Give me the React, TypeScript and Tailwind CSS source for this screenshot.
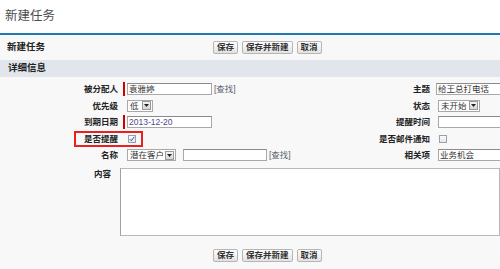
import React from 'react'

const font = "font-['Liberation_Sans','Noto_Sans_CJK_SC',sans-serif]"

function Btn({ children }: { children: React.ReactNode }) {
  return (
    <button className="h-[13px] px-[3px] flex items-center rounded-[2px] border border-[#b5b5b5] bg-gradient-to-b from-[#ffffff] to-[#e2e2e2] text-[8.5px] font-bold leading-none text-[#333]">
      {children}
    </button>
  )
}

function Buttons() {
  return (
    <div className="flex items-center gap-[4px]">
      <Btn>保存</Btn>
      <Btn>保存并新建</Btn>
      <Btn>取消</Btn>
    </div>
  )
}

function Label({ children, pr = 'pr-[3px]' }: { children: React.ReactNode; pr?: string }) {
  return <div className={`text-right text-[8.5px] font-bold text-[#222] whitespace-nowrap leading-none ${pr}`}>{children}</div>
}

function Req() {
  return <div className="w-[2px] h-[14px] bg-[#c00] mr-[2px]" />
}

function Input({ value, w = 'w-[85px]', color = 'text-[#333]' }: { value?: string; w?: string; color?: string }) {
  return (
    <div className={`${w} h-[12px] shrink-0 bg-white border border-[#a8a8a8] border-t-[#8a8a8a] flex items-center pl-[1px] text-[8.5px] leading-none whitespace-nowrap overflow-hidden ${color}`}>
      {value}
    </div>
  )
}

function Select({ value, w }: { value: string; w: string }) {
  return (
    <div className={`${w} h-[12px] shrink-0 bg-white border border-[#a8a8a8] flex items-center justify-between text-[8.5px] leading-none text-[#333]`}>
      <span className="pl-[2px]">{value}</span>
      <span className="w-[9px] h-[9px] mr-[1px] border border-[#9a9a9a] bg-gradient-to-b from-[#f4f4f4] to-[#d6d6d6] flex items-center justify-center">
        <svg width="5" height="3" viewBox="0 0 5 3"><path d="M0 0h5L2.5 3z" fill="#222" /></svg>
      </span>
    </div>
  )
}

function Check({ checked }: { checked?: boolean }) {
  return (
    <div className="w-[8px] h-[8px] border border-[#9aa0a8] bg-gradient-to-b from-[#fdfdfd] to-[#e4e6ea] flex items-center justify-center">
      {checked && (
        <svg width="6" height="6" viewBox="0 0 6 6"><path d="M0.8 3.2 2.3 4.7 5.3 0.8" stroke="#2b4fb0" strokeWidth="1" fill="none" /></svg>
      )}
    </div>
  )
}

function Lookup() {
  return <span className="ml-[2px] text-[8.5px] text-[#5a6470] leading-none whitespace-nowrap">[查找]</span>
}

function Row({ children, extra }: { children: React.ReactNode; extra?: React.ReactNode }) {
  return (
    <div className="relative grid grid-cols-[121px_190px_121px_68px] h-[16.5px] items-center">
      {children}
      {extra}
    </div>
  )
}

export default function App() {
  return (
    <div className={`w-[500px] h-[269px] overflow-hidden bg-white ${font}`}>
      <div className="h-[33px] flex items-center pl-[5px] text-[12.5px] text-[#4d4d4d]">新建任务</div>
      <div className="border-t-2 border-[#1e7ab0] bg-[#f8f8f8] h-[236px]">
        <div className="h-[25px] flex items-center">
          <div className="w-[213px] pl-[7px] text-[9.5px] font-bold text-[#222]">新建任务</div>
          <Buttons />
        </div>
        <div className="h-[17px] bg-[#e1e5ec] flex items-center pl-[8px] text-[9.5px] font-bold text-[#222]">详细信息</div>
        <div className="pt-[4px]">
          <Row>
            <Label>被分配人</Label>
            <div className="flex items-center pl-[2px]"><Req /><Input value="袁雅婷" /><Lookup /></div>
            <Label pr="pr-[2px]">主题</Label>
            <div className="flex items-center pl-[2px]"><Req /><Input value="给王总打电话" w="w-[90px]" /></div>
          </Row>
          <Row>
            <Label>优先级</Label>
            <div className="flex items-center pl-[6px]"><Select value="低" w="w-[26px]" /></div>
            <Label pr="pr-[2px]">状态</Label>
            <div className="flex items-center pl-[6px]"><Select value="未开始" w="w-[42px]" /></div>
          </Row>
          <Row>
            <Label>到期日期</Label>
            <div className="flex items-center pl-[2px]"><Req /><Input value="2013-12-20" color="text-[#4b4a8c]" /></div>
            <Label pr="pr-[2px]">提醒时间</Label>
            <div className="flex items-center pl-[6px]"><Input w="w-[90px]" /></div>
          </Row>
          <Row extra={<div className="absolute left-[74px] top-0 bottom-0 w-[69px] border-2 border-[#e8201e]" />}>
            <Label>是否提醒</Label>
            <div className="flex items-center pl-[7px]"><Check checked /></div>
            <Label pr="pr-[2px]">是否邮件通知</Label>
            <div className="flex items-center pl-[7px]"><Check /></div>
          </Row>
          <Row>
            <Label>名称</Label>
            <div className="flex items-center pl-[6px]">
              <Select value="潜在客户" w="w-[49px]" />
              <div className="w-[7px] shrink-0" />
              <Input w="w-[84px]" />
              <Lookup />
            </div>
            <Label pr="pr-[2px]">相关项</Label>
            <div className="flex items-center pl-[6px]"><Input value="业务机会" w="w-[90px]" /></div>
          </Row>
          <div className="flex mt-[4.5px]">
            <div className="w-[121px] pt-[2px]"><Label>内容</Label></div>
            <div className="pl-[6px]">
              <div className="w-[380px] h-[68px] bg-white border border-[#b8b8b8] border-l-[#a0a0a0]" />
            </div>
          </div>
          <div className="flex pl-[213px] mt-[13px]">
            <Buttons />
          </div>
        </div>
      </div>
    </div>
  )
}
